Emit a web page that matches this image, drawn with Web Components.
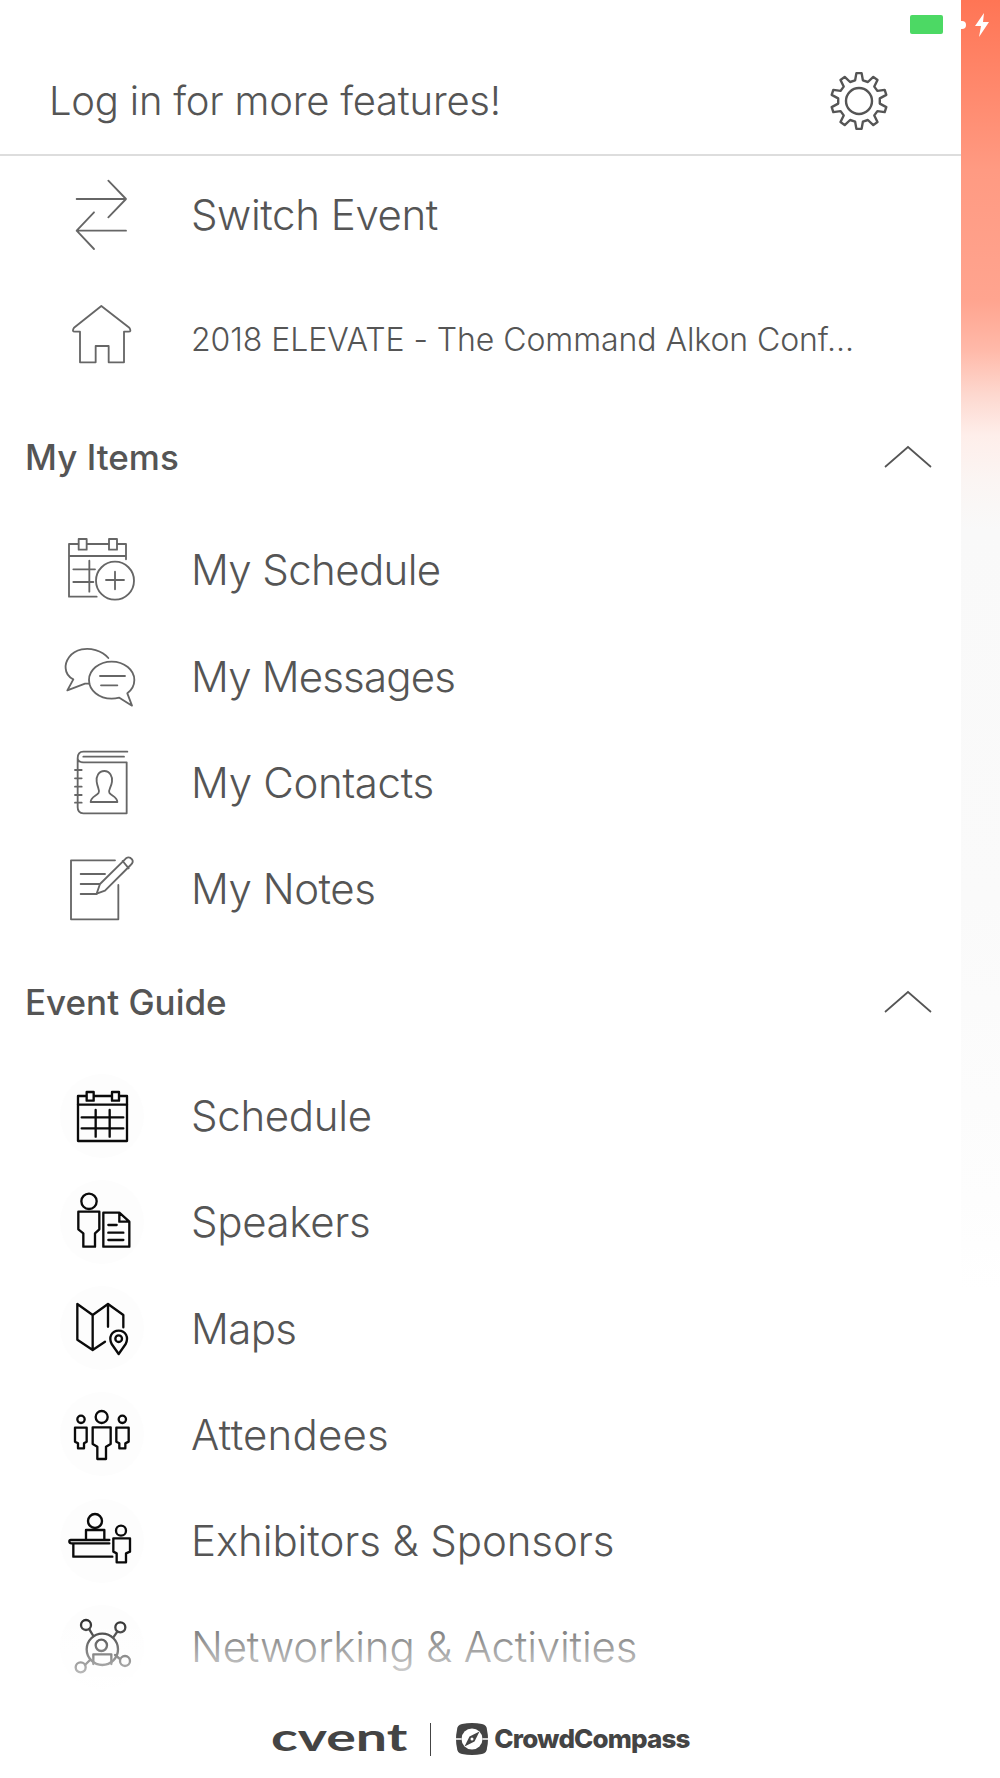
<!DOCTYPE html>
<html><head><meta charset="utf-8"><style>
html,body{margin:0;padding:0;background:#fff;height:1778px;overflow:hidden}
</style></head><body>
<app-shell>
  <menu-header>Log in for more features!</menu-header>
  <menu-row icon="switch" top style="letter-spacing:-.42px">Switch Event</menu-row>
  <menu-row icon="home" top small style="letter-spacing:-.07px">2018 ELEVATE - The Command Alkon Conf...</menu-row>
  <section-head first>My Items</section-head>
  <menu-row icon="addcal" style="letter-spacing:-.62px">My Schedule</menu-row>
  <menu-row icon="messages" style="letter-spacing:-.82px">My Messages</menu-row>
  <menu-row icon="contacts" style="letter-spacing:-.32px">My Contacts</menu-row>
  <menu-row icon="notes" style="letter-spacing:-.47px">My Notes</menu-row>
  <section-head>Event Guide</section-head>
  <menu-row icon="schedule" disc>Schedule</menu-row>
  <menu-row icon="speakers" disc>Speakers</menu-row>
  <menu-row icon="maps" disc style="letter-spacing:-.6px">Maps</menu-row>
  <menu-row icon="attendees" disc style="letter-spacing:.2px">Attendees</menu-row>
  <menu-row icon="exhibitors" disc style="letter-spacing:-.1px">Exhibitors &amp; Sponsors</menu-row>
  <menu-row icon="network" disc style="letter-spacing:-.2px">Networking &amp; Activities</menu-row>
  <brand-footer></brand-footer>
</app-shell>
<script>
function gearPath(cx,cy,ro,ri,n){
  let d='';const st=Math.PI*2/n;
  const pt=(a,r)=>(cx+r*Math.cos(a)).toFixed(1)+' '+(cy+r*Math.sin(a)).toFixed(1);
  for(let i=0;i<n;i++){
    const a=-Math.PI/2+i*st;
    d+=(i?'L':'M')+pt(a-st*.30,ri)+'L'+pt(a-st*.15,ro)+'L'+pt(a+st*.15,ro)+'L'+pt(a+st*.30,ri);
  }
  return d+'Z';
}
const ICONS={
 switch:{o:-30,cy:165,s:'<path d="M80 117H228M175 62L228 117L175 172M228 212H80M132 157L80 212L132 267"/>'},
 home:{o:-30,cy:540,s:'<path d="M154 438L72 503Q64 515 75 515H90V607H137V558H176V607H222V515H235Q246 515 238 503Z"/>'},
 addcal:{o:0,cy:150,s:'<path d="M170 230H87V72H115M141 72H206M232 72H258V118M87 108H258M100 148H165M100 186H160M148 122V215M198 180H252M225 155V208"/><rect x="116" y="57" width="24" height="32"/><rect x="207" y="57" width="24" height="32"/><circle cx="225" cy="182" r="57"/>'},
 messages:{o:0,cy:468,s:'<path d="M205 414C185 390 150 383 125 388C90 395 75 425 77 445C78 462 88 472 100 478L82 511L135 491H148"/><path d="M215 425C253 425 283 450 283 480C283 497 275 510 262 520L276 557L238 533C230 535 222 536 215 536C177 536 147 511 147 480C147 450 177 425 215 425Z"/><path d="M180 468H255M183 496H232"/>'},
 contacts:{o:0,cy:159,s:'<path d="M262 65H130Q113 65 113 85V232Q113 250 130 250H260V97H130Q113 97 113 85M130 80H252M105 120H125M105 145H125M105 170H125M105 195H125M105 218H125"/><path d="M193 123C175 123 168 140 170 155C172 172 180 180 176 188C170 198 152 200 152 216H232C232 200 214 198 208 188C204 180 214 172 216 155C218 140 210 123 193 123Z"/>'},
 notes:{o:0,cy:477,s:'<path d="M225 391H93V568H235V465M122 432H195M122 462H178M122 492H170"/><path d="M170 491L180 462L258 385Q268 378 276 388Q282 397 272 405L195 482ZM248 393L266 415"/>'},
 schedule:{o:0,cy:138,s:'<rect x="114" y="78" width="147" height="135"/><path d="M114 104H261M125 142H250M125 175H250M167 120V200M209 120V200"/><rect x="140" y="66" width="21" height="26" fill="#fdfdfd"/><rect x="216" y="66" width="21" height="26" fill="#fdfdfd"/>'},
 speakers:{o:0,cy:456,s:'<circle cx="147" cy="394" r="23"/><path d="M115 425H178V478L165 490V530H130V490L115 478Z"/><path d="M190 428H238L268 455V530H190ZM238 428V455H268M205 465H230M205 488H250M205 510H250"/>'},
 maps:{o:0,cy:147,s:'<path d="M250 145V108L204 75L158 108L112 75V182L158 213L195 188M158 108V213M204 75V143"/><path d="M236 225L215 195C205 175 215 155 236 155C257 155 267 175 257 195Z"/><circle cx="236" cy="179" r="10"/>'},
 attendees:{o:0,cy:465,s:'<circle cx="185" cy="414" r="18"/><path d="M158 445H212V495L198 503V540H172V503L158 495Z"/><circle cx="123" cy="421" r="11"/><path d="M105 446H140V488L132 493V508H114V493L105 488Z"/><circle cx="247" cy="421" r="11"/><path d="M229 446H266V488L256 493V508H238V493L229 488Z"/>'},
 exhibitors:{o:0,cy:153,s:'<circle cx="165" cy="93" r="21"/><path d="M138 148V120H193V148M208 150H92Q88 150 88 155Q88 160 100 160V200H217M100 160H208"/><circle cx="243" cy="122" r="15"/><path d="M220 145H270V185L258 190V217H230V190L220 185Z"/>'},
 network:{o:0,cy:471,s:'<circle cx="138" cy="405" r="15"/><circle cx="241" cy="412" r="15"/><path d="M148 418L160 438M232 425L220 442M135 525L150 510M240 507L225 495"/><circle cx="187" cy="478" r="47"/><circle cx="184" cy="466" r="17"/><path d="M160 522V493H214V522"/><circle cx="122" cy="532" r="15"/><circle cx="255" cy="513" r="15"/>'}
};
class AppShell extends HTMLElement{constructor(){super();this.attachShadow({mode:'open'}).innerHTML=`<style>
:host{display:flex;width:1000px;height:1778px;position:relative;overflow:hidden;background:#fff;font-family:Inter,"Liberation Sans",sans-serif;color:#555}
.panel{width:961px;flex:none;display:flex;flex-direction:column;background:#fff;position:relative}
.strip{flex:1;background:linear-gradient(180deg,#ff7555 0,#ff9a82 170px,#ffa48f 300px,#ffb9a9 350px,#fdd8cf 395px,#feeeea 435px,#fbf5f3 480px,#f9f9f9 530px,#fafafa 900px,#fdfdfd 1200px,#fff 1290px)}
.nub{position:absolute;left:961px;top:21px;width:5px;height:8px;background:#fff;border-radius:0 4px 4px 0}
.bat{position:absolute;left:910px;top:15px;width:33px;height:19px;background:#4cd964;border-radius:2px}
.bolt{position:absolute;left:975px;top:13px}
.fade{position:absolute;left:0;top:1606px;width:961px;height:94px;background:linear-gradient(180deg,rgba(255,255,255,0),#fff);pointer-events:none}
</style><div class="panel"><slot></slot><div class="fade"></div></div><div class="strip"></div><div class="bat"></div><div class="nub"></div>
<svg class="bolt" width="14" height="24" viewBox="0 0 14 24"><path d="M9 0L0 13H6L4 24L14 9H8Z" fill="#fff"/></svg>`}}
class MenuHeader extends HTMLElement{constructor(){super();this.attachShadow({mode:'open'}).innerHTML=`<style>
:host{display:flex;align-items:center;justify-content:space-between;box-sizing:border-box;height:156px;padding:48px 72px 0 49px;border-bottom:2px solid #ddd;font-size:40px;font-weight:300;letter-spacing:-.22px}
svg{display:block;fill:none;stroke:#555;stroke-width:2.4;stroke-linejoin:round}
</style><span><slot></slot></span><svg width="60" height="60" viewBox="0 0 60 60"><path d="${gearPath(30,30,28,21,10)}"/><circle cx="30" cy="30" r="13"/></svg>`}}
class MenuRow extends HTMLElement{constructor(){super();
 const ic=ICONS[this.getAttribute('icon')];const vb=`${ic.o} ${ic.cy-159} 360 318`;
 const disc=this.hasAttribute('disc');const top=this.hasAttribute('top');const small=this.hasAttribute('small');
 this.attachShadow({mode:'open'}).innerHTML=`<style>
:host{display:flex;align-items:center;height:${top?118:106.33}px;${top&&small?'margin-top:7px;':''}position:relative;font-size:${small?32:42}px;letter-spacing:${small?-.12:-.32}px;font-weight:300;white-space:nowrap}
.i{width:120px;height:106px;margin-left:40px;margin-right:31px;flex:none;position:relative;display:block}
.d{position:absolute;left:20px;top:11px;width:84px;height:84px;border-radius:50%;background:#fdfdfd}
svg{position:absolute;left:0;top:0;fill:none;stroke:${disc?'#0a0a0a':'#666'};stroke-width:${disc?7:5.5};stroke-linejoin:round;stroke-linecap:round}
</style><span class="i">${disc?'<span class="d"></span>':''}<svg width="120" height="106" viewBox="${vb}">${ic.s}</svg></span><span><slot></slot></span>`}}
class SectionHead extends HTMLElement{constructor(){super();const f=this.hasAttribute('first');this.attachShadow({mode:'open'}).innerHTML=`<style>
:host{display:flex;align-items:center;justify-content:space-between;box-sizing:border-box;height:${f?118:120.5}px;padding:0 29px ${f?2:0}px 25px;font-size:35px;font-weight:500;color:#555}
svg{display:block;fill:none;stroke:#555;stroke-width:1.7}
</style><span><slot></slot></span><svg width="48" height="24" viewBox="0 0 48 24"><path d="M1 22L24 2L47 22"/></svg>`}}
class BrandFooter extends HTMLElement{constructor(){super();this.attachShadow({mode:'open'}).innerHTML=`<style>
:host{display:flex;align-items:center;justify-content:center;height:78px;color:#444;background:#fff;position:relative;z-index:1}
.c{font-size:38px;font-weight:700;display:inline-block;width:134px;transform:scaleX(1.46);transform-origin:0 50%;white-space:nowrap;font-family:Lato,sans-serif;line-height:1;margin-top:-6px}
.b{width:1px;height:33px;background:#444;margin:0 25px}
svg{display:block;margin-right:6px}
.cc{font-size:26px;font-weight:800;letter-spacing:-.85px;font-family:Inter,sans-serif;white-space:nowrap;margin-top:-2px}
</style><span class="c">cvent</span><span class="b"></span>
<svg width="32" height="32" viewBox="0 0 32 32"><path d="M6 1Q16 -1 26 1Q31 2 31 7Q33 16 31 25Q31 30 26 31Q16 33 6 31Q1 30 1 25Q-1 16 1 7Q1 2 6 1Z" fill="#444"/><circle cx="16" cy="16" r="10.5" fill="#fff"/><path d="M23.5 8.5L18.5 18.5L8.5 23.5L13.5 13.5Z" fill="#444"/><circle cx="16" cy="16" r="1.5" fill="#fff"/><path d="M0 16H5.5M26.5 16H32" stroke="#fff" stroke-width="1.5"/></svg>
<span class="cc">CrowdCompass</span>`}}
customElements.define('app-shell',AppShell);
customElements.define('menu-header',MenuHeader);
customElements.define('menu-row',MenuRow);
customElements.define('section-head',SectionHead);
customElements.define('brand-footer',BrandFooter);
</script>
</body></html>
